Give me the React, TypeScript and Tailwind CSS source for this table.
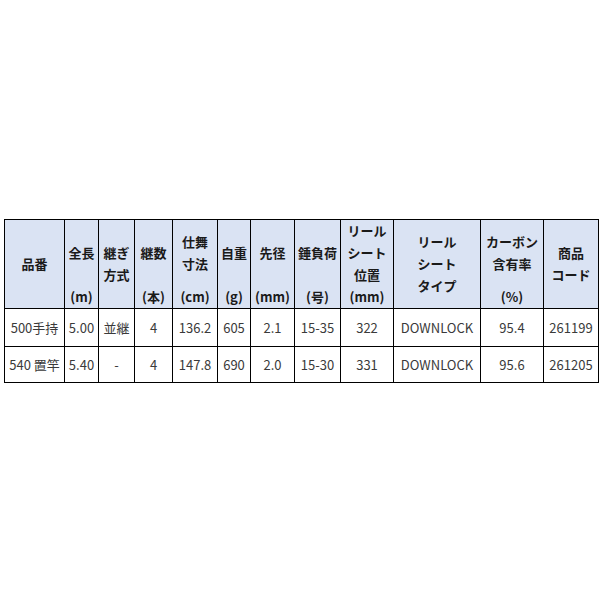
import React from "react";

type Line = { t: string; h?: string };

const widths = [60, 34, 36, 38, 45, 33, 44, 46, 53, 87, 63, 55];

// header lines; "" = blank 22px line, "~" = half blank 11px
const headers: string[][] = [
  ["品番"],
  ["", "全長", "", "(m)"],
  ["", "継ぎ", "方式", ""],
  ["", "継数", "", "(本)"],
  ["~", "仕舞", "寸法", "~", "(cm)"],
  ["", "自重", "", "(g)"],
  ["", "先径", "", "(mm)"],
  ["", "錘負荷", "", "(号)"],
  ["リール", "シート", "位置", "(mm)"],
  ["リール", "シート", "タイプ"],
  ["~", "カーボン", "含有率", "~", "(%)"],
  ["商品", "コード"],
];

const rows = [
  ["500手持", "5.00", "並継", "4", "136.2", "605", "2.1", "15-35", "322", "DOWNLOCK", "95.4", "261199"],
  ["540 置竿", "5.40", "-", "4", "147.8", "690", "2.0", "15-30", "331", "DOWNLOCK", "95.6", "261205"],
];

const App = () => {
  return (
    <div className="w-[600px] h-[600px] bg-white pt-[219px] pl-[4px] font-['Noto_Sans_CJK_JP',sans-serif]">
      <table className="border-collapse table-fixed w-[594px]">
        <colgroup>
          {widths.map((w, i) => (
            <col key={i} style={{ width: w }} />
          ))}
        </colgroup>
        <thead>
          <tr className="h-[89px] bg-[#dae3f3]">
            {headers.map((lines, i) => (
              <th key={i} className="border border-black p-0 align-middle font-bold text-[13px] text-[#1a1a1a]">
                <div className="flex flex-col items-center justify-center">
                  {lines.map((l, j) =>
                    l === "~" ? (
                      <div key={j} className="h-[11px]" />
                    ) : (
                      <div key={j} className="h-[22px] leading-[22px] whitespace-nowrap">
                        {l}
                      </div>
                    )
                  )}
                </div>
              </th>
            ))}
          </tr>
        </thead>
        <tbody>
          {rows.map((r, ri) => (
            <tr key={ri} className={ri === 0 ? "h-[38px]" : "h-[36px]"}>
              {r.map((c, ci) => (
                <td key={ci} className="border border-black p-0 text-center align-middle whitespace-nowrap text-[13px] text-[#3a3a3a]">
                  {c}
                </td>
              ))}
            </tr>
          ))}
        </tbody>
      </table>
    </div>
  );
};

export default App;
